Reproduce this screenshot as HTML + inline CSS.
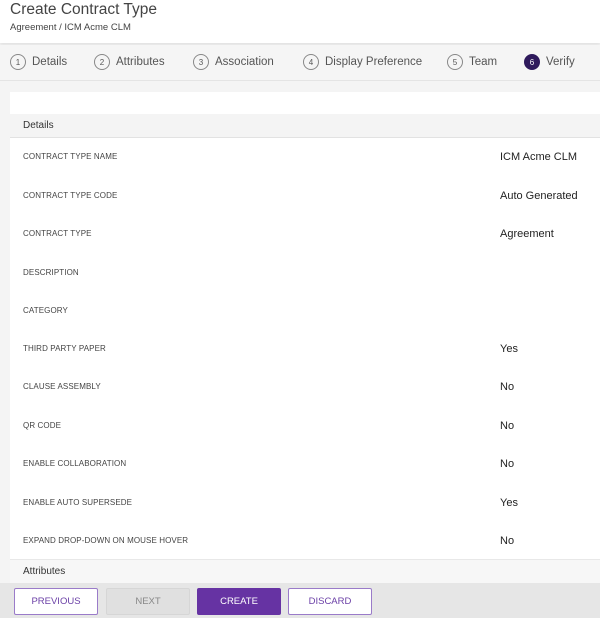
<!DOCTYPE html>
<html><head><style>
*{margin:0;padding:0;box-sizing:border-box}
body{width:600px;height:618px;overflow:hidden;background:#f4f4f4;font-family:"Liberation Sans",sans-serif;position:relative;color:#333}
.hdr{position:absolute;top:0;left:0;width:600px;height:43px;background:#fff;box-shadow:0 2px 3px rgba(0,0,0,.08)}
.hdr h1{position:absolute;left:10px;top:1px;font-size:15.5px;font-weight:normal;color:#444}
.hdr p{position:absolute;left:10px;top:22px;font-size:9.5px;color:#444}
.tabs{position:absolute;top:45px;left:0;width:600px;height:36px;background:#f5f5f5;border-bottom:1px solid #e4e4e4}
.tab{position:absolute;top:9px;font-size:11.5px;color:#555;display:flex;align-items:center}
.c{width:16px;height:16px;border:1px solid #888;border-radius:50%;font-size:8px;display:inline-flex;align-items:center;justify-content:center;margin-right:6px;color:#555}
.c.on{background:#2f1a5c;border-color:#2f1a5c;color:#fff}
.panel{position:absolute;left:10px;top:92px;width:590px;height:467px;background:#fff}
.sec{position:absolute;left:10px;width:590px;height:24px;background:#f4f4f4;font-size:10px;padding:6px 0 0 13px;color:#333}
.row{position:absolute;left:23px;font-size:8px;color:#444;letter-spacing:.1px}
.val{position:absolute;left:500px;font-size:11px;color:#222}
.foot{position:absolute;top:583px;left:0;width:600px;height:35px;background:#e6e6e6}
.b{position:absolute;top:5px;height:27px;width:84px;font-size:9.5px;display:flex;align-items:center;justify-content:center;border:1px solid #9a7bc9;background:#fff;color:#6a3fa6;border-radius:2px}
</style></head><body>
<div class="hdr"><h1>Create Contract Type</h1><p>Agreement / ICM Acme CLM</p></div>
<div class="tabs">
<div class="tab" style="left:10px"><span class="c">1</span>Details</div>
<div class="tab" style="left:94px"><span class="c">2</span>Attributes</div>
<div class="tab" style="left:193px"><span class="c">3</span>Association</div>
<div class="tab" style="left:303px"><span class="c">4</span>Display Preference</div>
<div class="tab" style="left:447px"><span class="c">5</span>Team</div>
<div class="tab" style="left:524px"><span class="c on">6</span>Verify</div>
</div>
<div class="panel"></div>
<div class="sec" style="top:114px;border-bottom:1px solid #e2e2e2">Details</div>
<div class="row" style="top:152px">CONTRACT TYPE NAME</div><div class="val" style="top:151px">ICM Acme CLM</div>
<div class="row" style="top:191px">CONTRACT TYPE CODE</div><div class="val" style="top:190px">Auto Generated</div>
<div class="row" style="top:229px">CONTRACT TYPE</div><div class="val" style="top:228px">Agreement</div>
<div class="row" style="top:268px">DESCRIPTION</div>
<div class="row" style="top:306px">CATEGORY</div>
<div class="row" style="top:344px">THIRD PARTY PAPER</div><div class="val" style="top:343px">Yes</div>
<div class="row" style="top:382px">CLAUSE ASSEMBLY</div><div class="val" style="top:381px">No</div>
<div class="row" style="top:421px">QR CODE</div><div class="val" style="top:420px">No</div>
<div class="row" style="top:459px">ENABLE COLLABORATION</div><div class="val" style="top:458px">No</div>
<div class="row" style="top:498px">ENABLE AUTO SUPERSEDE</div><div class="val" style="top:497px">Yes</div>
<div class="row" style="top:536px">EXPAND DROP-DOWN ON MOUSE HOVER</div><div class="val" style="top:535px">No</div>
<div class="sec" style="top:559px;background:#f7f7f7;border-top:1px solid #e8e8e8">Attributes</div>
<div class="foot">
<div class="b" style="left:14px">PREVIOUS</div>
<div class="b" style="left:106px;background:#e0e0e0;border-color:#d6d6d6;color:#888">NEXT</div>
<div class="b" style="left:197px;background:#6633a3;border-color:#6633a3;color:#fff">CREATE</div>
<div class="b" style="left:288px">DISCARD</div>
</div>
</body></html>
